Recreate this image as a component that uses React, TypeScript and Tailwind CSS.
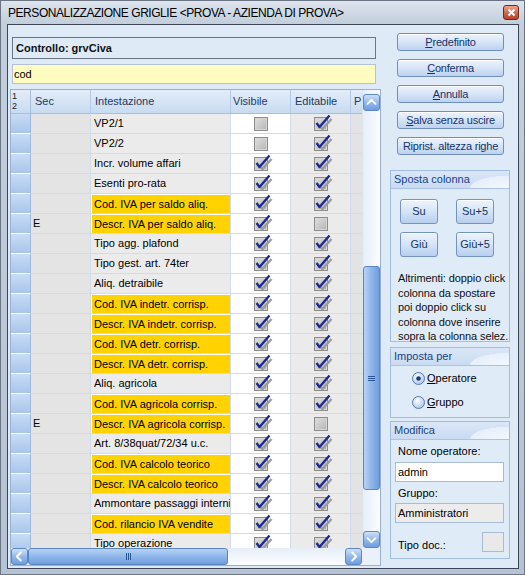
import React from "react";

type Row = { t: string; s?: string; y?: boolean; v: boolean; e: boolean };

const rows: Row[] = [
  { t: "VP2/1", v: false, e: true },
  { t: "VP2/2", v: false, e: true },
  { t: "Incr. volume affari", v: true, e: true },
  { t: "Esenti pro-rata", v: true, e: true },
  { t: "Cod. IVA per saldo aliq.", y: true, v: true, e: true },
  { t: "Descr. IVA per saldo aliq.", s: "E", y: true, v: true, e: false },
  { t: "Tipo agg. plafond", v: true, e: true },
  { t: "Tipo gest. art. 74ter", v: true, e: true },
  { t: "Aliq. detraibile", v: true, e: true },
  { t: "Cod. IVA indetr. corrisp.", y: true, v: true, e: true },
  { t: "Descr. IVA indetr. corrisp.", y: true, v: true, e: true },
  { t: "Cod. IVA detr. corrisp.", y: true, v: true, e: true },
  { t: "Descr. IVA detr. corrisp.", y: true, v: true, e: true },
  { t: "Aliq. agricola", v: true, e: true },
  { t: "Cod. IVA agricola corrisp.", y: true, v: true, e: true },
  { t: "Descr. IVA agricola corrisp.", s: "E", y: true, v: true, e: false },
  { t: "Art. 8/38quat/72/34 u.c.", v: true, e: true },
  { t: "Cod. IVA calcolo teorico", y: true, v: true, e: true },
  { t: "Descr. IVA calcolo teorico", y: true, v: true, e: true },
  { t: "Ammontare passaggi interni", v: true, e: true },
  { t: "Cod. rilancio IVA vendite", y: true, v: true, e: true },
  { t: "Tipo operazione", v: true, e: true },
];

function Check({ checked }: { checked: boolean }) {
  return (
    <svg width="14" height="14" viewBox="0 0 14 14" className="overflow-visible">
      <defs>
        <linearGradient id="cbg" x1="0" y1="0" x2="1" y2="1">
          <stop offset="0" stopColor="#e2e2e2" />
          <stop offset="1" stopColor="#b2b2b2" />
        </linearGradient>
      </defs>
      <rect x="0.5" y="0.5" width="13" height="13" fill="url(#cbg)" stroke="#8c8c8c" />
      <rect x="1.5" y="1.5" width="11" height="11" fill="none" stroke="#d6d6d6" />
      {checked && (
        <>
          <path d="M5.5 9 L8.5 12 L17.5 2" stroke="#9b9b9b" strokeWidth="2.4" fill="none" />
          <path d="M2.5 6 L5.5 10 L15.5 -1.5" stroke="#1d2b8e" strokeWidth="2.4" fill="none" strokeLinejoin="round" />
        </>
      )}
    </svg>
  );
}

function Btn({ children }: { children: React.ReactNode }) {
  return (
    <div className="h-[18px] w-[107px] rounded-[3px] border border-[#6f8fbf] bg-gradient-to-b from-[#edf3fc] via-[#d7e5f7] to-[#bcd2ef] flex items-center justify-center text-[#15336a] shadow-[inset_0_1px_0_#ffffff] tracking-[-0.2px]">
      {children}
    </div>
  );
}

function SmallBtn({ children }: { children: React.ReactNode }) {
  return (
    <div className="h-[25px] w-[38px] rounded-[3px] border border-[#7393c2] bg-gradient-to-b from-[#eef4fc] via-[#d5e4f7] to-[#b7cfee] flex items-center justify-center text-[#15336a] shadow-[inset_0_1px_0_#ffffff]">
      {children}
    </div>
  );
}

function GroupHeader({ title }: { title: string }) {
  return (
    <div className="h-[18px] shrink-0 flex items-center pl-[3px] text-[#15428b] border-b border-[#a9c4e8] bg-[radial-gradient(ellipse_70px_22px_at_100%_100%,#f3f8fe_0%,#e6effa_55%,transparent_56%),linear-gradient(to_bottom,#dbe7f7,#c9dbf2)]">
      {title}
    </div>
  );
}

function Radio({ on }: { on: boolean }) {
  return (
    <svg width="13" height="13" viewBox="0 0 13 13">
      <defs>
        <radialGradient id="rg" cx="0.4" cy="0.35" r="0.7">
          <stop offset="0" stopColor="#ffffff" />
          <stop offset="1" stopColor="#a9c4e8" />
        </radialGradient>
      </defs>
      <circle cx="6.5" cy="6.5" r="6" fill="url(#rg)" stroke="#5a7bb0" />
      {on && <circle cx="6.5" cy="6.5" r="2.3" fill="#1d3a78" />}
    </svg>
  );
}

function ArrowBtn({ dir }: { dir: "up" | "down" | "left" | "right" }) {
  const d =
    dir === "up"
      ? "M4 10 L8.5 5.5 L13 10"
      : dir === "down"
      ? "M4 7 L8.5 11.5 L13 7"
      : dir === "left"
      ? "M10 4 L5.5 8.5 L10 13"
      : "M7 4 L11.5 8.5 L7 13";
  return (
    <div className="w-[17px] h-[17px] shrink-0 rounded-[3px] border border-[#5c86c4] bg-gradient-to-b from-[#cfe1f8] via-[#93b9eb] to-[#6f9de0] flex items-center justify-center">
      <svg width="17" height="17" viewBox="0 0 17 17">
        <path d={d} stroke="#ffffff" strokeWidth="2.2" fill="none" strokeLinecap="round" strokeLinejoin="round" />
      </svg>
    </div>
  );
}

const line = "border-[#d0dcec]";

export default function App() {
  return (
    <div className="w-[525px] h-[575px] flex flex-col bg-gradient-to-b from-[#c3cfdd] to-[#b4c3d5] font-['Liberation_Sans',Arial,sans-serif] text-[11px] text-black overflow-hidden border border-[#6b7584]">
      {/* title bar */}
      <div className="h-[23px] shrink-0 flex items-center justify-between pl-[7px] pr-[5px] bg-gradient-to-b from-[#dde4ed] to-[#c2cedc]">
        <span className="text-[12px] tracking-[-0.45px] text-black">{"PERSONALIZZAZIONE GRIGLIE <PROVA - AZIENDA DI PROVA>"}</span>
        <div className="w-[16px] h-[15px] rounded-[3px] border border-[#6a2a1e] bg-gradient-to-b from-[#eaa690] via-[#d4694c] to-[#b9422a] flex items-center justify-center">
          <svg width="9" height="9" viewBox="0 0 9 9">
            <path d="M1.5 1.5 L7.5 7.5 M7.5 1.5 L1.5 7.5" stroke="#ffffff" strokeWidth="2" />
          </svg>
        </div>
      </div>

      {/* client */}
      <div className="flex-1 ml-[6px] mr-[5px] mb-[5px] border border-[#3d4652] bg-[#dfeaf7] flex">
        {/* left column */}
        <div className="w-[373px] pl-[2px] pt-[12px] flex flex-col">
          <div className="ml-[2px] w-[364px] h-[22px] border border-[#6b7583] flex items-center pl-[3px] font-bold text-[#111]">
            Controllo: grvCiva
          </div>
          <div className="ml-[2px] mt-[5px] w-[364px] h-[20px] border border-[#b3c2d4] bg-[#fefcc0] flex items-center pl-[1px]">
            cod
          </div>
          {/* grid */}
          <div className="mt-[5px] w-[371px] h-[477px] border border-[#98b0d2] bg-[#f2f6fc] flex flex-col">
            <div className="flex h-[458px]">
              {/* table */}
              <div className="w-[351px] flex flex-col overflow-hidden">
                {/* header */}
                <div className="flex h-[24px] shrink-0 bg-gradient-to-b from-[#e3edf9] to-[#c9dbf1] border-b border-[#a6bfdf] text-[#1e3a62]">
                  <div className="w-[20px] border-r border-[#a6bfdf] text-[9px] leading-[10px] pl-[1px] pt-[1px] text-[#222]">
                    1<br />2
                  </div>
                  <div className="w-[60px] border-r border-[#b4c9e6] flex items-center pl-[4px]">Sec</div>
                  <div className="w-[140px] border-r border-[#b4c9e6] flex items-center pl-[4px]">Intestazione</div>
                  <div className="w-[60px] border-r border-[#b4c9e6] flex items-center pl-[2px]">Visibile</div>
                  <div className="w-[60px] border-r border-[#b4c9e6] flex items-center pl-[4px]">Editabile</div>
                  <div className="w-[11px] flex items-center pl-[3px] overflow-hidden">P</div>
                </div>
                {rows.map((r, i) => (
                  <div key={i} className="flex h-[20px] shrink-0">
                    <div className="w-[20px] shrink-0 bg-gradient-to-b from-[#c9dcf4] to-[#a8c5ec] border-b border-r border-b-white border-r-[#9db9df]" />
                    <div className={`w-[60px] shrink-0 bg-[#e4e4e4] border-r border-b ${line} flex items-center pl-[2px]`}>
                      {r.s ?? ""}
                    </div>
                    <div className={`w-[140px] shrink-0 bg-[#ebebeb] border-r border-b ${line} whitespace-nowrap overflow-hidden`}>
                      {r.y ? (
                        <div className="h-full w-full bg-[#ffd200] border-l border-t border-white flex items-center pl-[2px]">
                          {r.t}
                        </div>
                      ) : (
                        <div className="h-full w-full flex items-center pl-[3px]">{r.t}</div>
                      )}
                    </div>
                    <div className={`w-[60px] shrink-0 bg-white border-r border-b ${line} flex items-center justify-center`}>
                      <Check checked={r.v} />
                    </div>
                    <div className={`w-[60px] shrink-0 bg-[#ebebeb] border-r border-b ${line} flex items-center justify-center`}>
                      <Check checked={r.e} />
                    </div>
                    <div className={`w-[11px] shrink-0 bg-[#e3e3e3] border-b ${line}`} />
                  </div>
                ))}
              </div>
              {/* vertical scrollbar */}
              <div className="w-[18px] flex flex-col items-center pt-[4px] bg-gradient-to-r from-[#e6eef9] to-[#fbfdff] border-l border-[#dbe5f2]">
                <ArrowBtn dir="up" />
                <div className="h-[155px] shrink-0" />
                <div className="w-[17px] h-[224px] shrink-0 rounded-[3px] border border-[#5b86c5] bg-gradient-to-r from-[#b7d3f4] via-[#8fb6e9] to-[#6f9ddf] flex items-center justify-center">
                  <div className="flex flex-col gap-[1px]">
                    <div className="w-[7px] h-[1px] bg-[#2d5896]" />
                    <div className="w-[7px] h-[1px] bg-[#2d5896]" />
                    <div className="w-[7px] h-[1px] bg-[#2d5896]" />
                  </div>
                </div>
                <div className="flex-1" />
                <ArrowBtn dir="down" />
              </div>
            </div>
            {/* horizontal scrollbar */}
            <div className="flex h-[17px] shrink-0">
              <div className="w-[351px] flex bg-gradient-to-b from-[#e6eef9] to-[#fbfdff]">
                <ArrowBtn dir="left" />
                <div className="w-[200px] h-[17px] rounded-[3px] border border-[#5b86c5] bg-gradient-to-b from-[#b7d3f4] via-[#8fb6e9] to-[#6f9ddf] flex items-center justify-center">
                  <div className="flex gap-[1px]">
                    <div className="w-[1px] h-[7px] bg-[#2d5896]" />
                    <div className="w-[1px] h-[7px] bg-[#2d5896]" />
                    <div className="w-[1px] h-[7px] bg-[#2d5896]" />
                  </div>
                </div>
                <div className="flex-1" />
                <ArrowBtn dir="right" />
              </div>
              <div className="flex-1 bg-[#eaf1fa]" />
            </div>
          </div>
        </div>

        {/* right column */}
        <div className="ml-[9px] w-[120px] flex flex-col pt-[8px]">
          <div className="pl-[7px] flex flex-col gap-[8px]">
            <Btn><span><u>P</u>redefinito</span></Btn>
            <Btn><span><u>C</u>onferma</span></Btn>
            <Btn><span><u>A</u>nnulla</span></Btn>
            <Btn><span><u>S</u>alva senza uscire</span></Btn>
            <Btn><span>Riprist. altezza righe</span></Btn>
          </div>

          <div className="mt-[15px] h-[172px] border border-[#a0bde4] bg-[#e0ebf8] flex flex-col">
            <GroupHeader title="Sposta colonna" />
            <div className="pl-[9px] pt-[10px] flex flex-col gap-[8px]">
              <div className="flex gap-[18px]">
                <SmallBtn>Su</SmallBtn>
                <SmallBtn>Su+5</SmallBtn>
              </div>
              <div className="flex gap-[18px]">
                <SmallBtn>Giù</SmallBtn>
                <SmallBtn>Giù+5</SmallBtn>
              </div>
            </div>
            <div className="pl-[7px] mt-[14px] leading-[14.5px] whitespace-nowrap text-[#111] tracking-[-0.1px]">
              Altrimenti: doppio click<br />
              colonna da spostare<br />
              poi doppio click su<br />
              colonna dove inserire<br />
              sopra la colonna selez.
            </div>
          </div>

          <div className="mt-[5px] h-[71px] border border-[#a0bde4] bg-[#e0ebf8] flex flex-col">
            <GroupHeader title="Imposta per" />
            <div className="pl-[21px] pt-[5px] flex flex-col gap-[10px]">
              <div className="flex items-center gap-[2px] h-[14px]">
                <Radio on />
                <span><u>O</u>peratore</span>
              </div>
              <div className="flex items-center gap-[2px] h-[14px]">
                <Radio on={false} />
                <span><u>G</u>ruppo</span>
              </div>
            </div>
          </div>

          <div className="mt-[3px] h-[138px] border border-[#a0bde4] bg-[#e0ebf8] flex flex-col">
            <GroupHeader title="Modifica" />
            <div className="pl-[4px] flex flex-col">
              <div className="pl-[3px] mt-[4px] h-[14px] leading-[14px]">Nome operatore:</div>
              <div className="mt-[4px] w-[109px] h-[20px] border border-[#a9bcd6] bg-white flex items-center pl-[2px]">admin</div>
              <div className="pl-[3px] mt-[4px] h-[14px] leading-[14px]">Gruppo:</div>
              <div className="mt-[3px] w-[109px] h-[20px] border border-[#a9bcd6] bg-[#ececec] flex items-center pl-[2px]">Amministratori</div>
              <div className="mt-[8px] flex items-center w-[109px] justify-between">
                <span className="pl-[3px] mt-[6px]">Tipo doc.:</span>
                <div className="w-[22px] h-[20px] border border-[#a9bcd6] bg-[#e9e9e9]" />
              </div>
            </div>
          </div>
        </div>
      </div>
    </div>
  );
}
